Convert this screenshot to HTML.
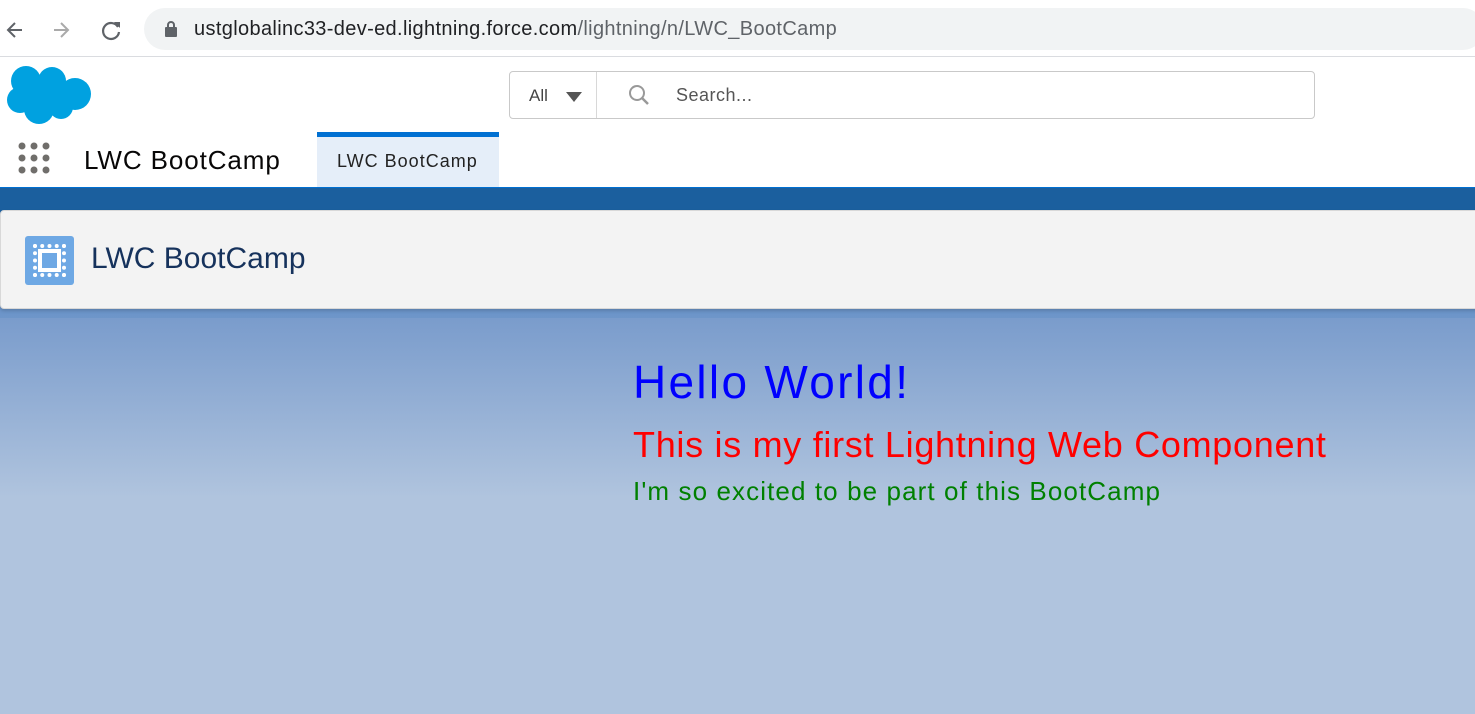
<!DOCTYPE html>
<html><head><style>
*{margin:0;padding:0;box-sizing:border-box}
body{width:1475px;height:714px;overflow:hidden;font-family:"Liberation Sans",sans-serif;background:#b0c4de;position:relative}
.chrome{position:absolute;left:0;top:0;width:1475px;height:57px;background:#fff;border-bottom:1px solid #dadce0}
.url{position:absolute;left:144px;top:8px;width:1340px;height:42px;border-radius:21px;background:#f1f3f4;font-size:20px;color:#202124;line-height:42px;padding-left:50px;letter-spacing:.35px}
.url span{color:#5f6368}
.hdr{position:absolute;left:0;top:57px;width:1475px;height:131px;background:#fff}
.search{position:absolute;left:509px;top:14px;width:806px;height:48px;border:1px solid #c9c9c9;border-radius:4px;background:#fff}
.band{position:absolute;left:0;top:188px;width:1475px;height:130px;background:linear-gradient(#1b5f9e 0,#1b5f9e 22px,#6a93c8 120px,#b0c4de 300px)}
.grad{position:absolute;left:0;top:318px;width:1475px;height:180px;background:linear-gradient(#7a9ccc,#b0c4de)}
.card{position:absolute;left:0;top:210px;width:1480px;height:99px;background:#f3f3f3;border:1px solid #d8d8d8;border-radius:4px;box-shadow:0 2px 3px rgba(0,0,0,.15)}
</style></head><body>
<div class="chrome">
<svg style="position:absolute;left:4px;top:18px" width="120" height="24" viewBox="0 0 120 24"><path d="M18 12H4M11 5l-7 7 7 7" stroke="#5f6368" stroke-width="2" fill="none"/><path d="M50 12h14M57 5l7 7-7 7" stroke="#aaa" stroke-width="2" fill="none"/><path d="M114 9a8 8 0 1 0 1 5" stroke="#5f6368" stroke-width="2.2" fill="none"/><path d="M110 4h6v6z" fill="#5f6368"/></svg>
<div class="url"><svg style="position:absolute;left:20px;top:13px" width="14" height="16"><rect x="1" y="6" width="12" height="10" rx="1" fill="#5f6368"/><path d="M4 7V4a3 3 0 0 1 6 0v3" stroke="#5f6368" stroke-width="2" fill="none"/></svg>ustglobalinc33-dev-ed.lightning.force.com<span>/lightning/n/LWC_BootCamp</span></div>
</div>
<div class="hdr">
<svg style="position:absolute;left:4px;top:7px" width="88" height="62" viewBox="0 0 88 62"><g fill="#00a1e0"><circle cx="22" cy="17" r="15"/><circle cx="48" cy="17" r="14"/><circle cx="71" cy="30" r="16"/><circle cx="16" cy="36" r="13"/><circle cx="35" cy="45" r="15"/><circle cx="57" cy="43" r="12"/><rect x="16" y="20" width="50" height="25"/></g></svg>
<div class="search"><span style="position:absolute;left:19px;top:14px;font-size:17px;color:#444">All</span><svg style="position:absolute;left:56px;top:20px" width="16" height="10"><path d="M0 0h16L8 10z" fill="#555"/></svg><div style="position:absolute;left:86px;top:0;width:1px;height:46px;background:#d8d8d8"></div><svg style="position:absolute;left:118px;top:12px" width="22" height="22"><circle cx="9" cy="9" r="7" stroke="#999" stroke-width="2" fill="none"/><path d="M14 14l6 6" stroke="#999" stroke-width="2.5"/></svg><span style="position:absolute;left:166px;top:13px;font-size:18px;color:#555;letter-spacing:.5px">Search...</span></div>
<svg style="position:absolute;left:18px;top:85px" width="34" height="34"><g fill="#706e6b"><circle cx="4" cy="4" r="3.5"/><circle cx="16" cy="4" r="3.5"/><circle cx="28" cy="4" r="3.5"/><circle cx="4" cy="16" r="3.5"/><circle cx="16" cy="16" r="3.5"/><circle cx="28" cy="16" r="3.5"/><circle cx="4" cy="28" r="3.5"/><circle cx="16" cy="28" r="3.5"/><circle cx="28" cy="28" r="3.5"/></g></svg>
<div style="position:absolute;left:84px;top:88px;font-size:26px;color:#080707;letter-spacing:.9px">LWC BootCamp</div>
<div style="position:absolute;left:317px;top:75px;width:182px;height:56px;background:#e5eef9;border-top:5px solid #0070d2"><div style="position:absolute;left:20px;top:14px;font-size:18px;color:#222;letter-spacing:1px">LWC BootCamp</div></div>
</div>
<div style="position:absolute;left:0;top:187px;width:1475px;height:4px;background:#0070d2"></div>
<div class="band"></div><div class="grad"></div>
<div class="card">
<div style="position:absolute;left:24px;top:25px;width:49px;height:49px;background:#6ea8e4;border-radius:3px"><div style="position:absolute;left:8px;top:8px;width:33px;height:33px;border:4px dotted #fff"></div><div style="position:absolute;left:13px;top:13px;width:23px;height:23px;border:4px solid #fff"></div></div>
<div style="position:absolute;left:90px;top:31px;font-size:30px;color:#16325c;font-weight:300">LWC BootCamp</div>
</div>
<div style="position:absolute;left:633px;top:355px;font-size:46px;color:#0000ff;letter-spacing:2.3px">Hello World!</div>
<div style="position:absolute;left:633px;top:424px;font-size:36px;color:#ff0000;letter-spacing:.7px">This is my first Lightning Web Component</div>
<div style="position:absolute;left:633px;top:476px;font-size:26px;color:#008000;letter-spacing:1.1px">I'm so excited to be part of this BootCamp</div>
</body></html>
